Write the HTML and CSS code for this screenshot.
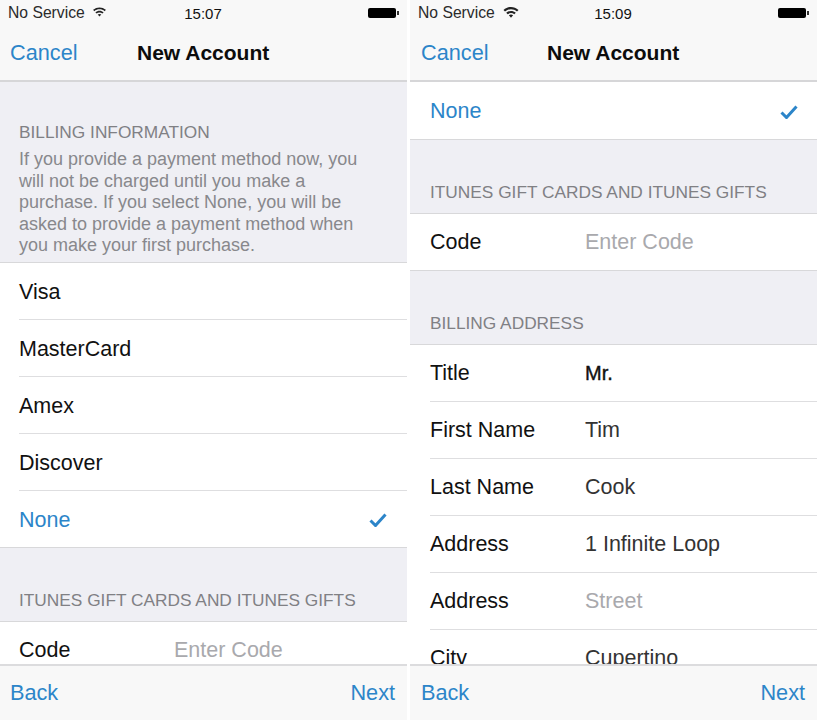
FILE: index.html
```html
<!DOCTYPE html>
<html lang="en">
<head>
<meta charset="utf-8">
<title>New Account</title>
<link rel="stylesheet" href="styles.css">
</head>
<body>
<main class="screens">
  <section class="phone">
    <header class="top">
      <div class="status">
        <div class="status-left"><span>No Service</span>
          <svg class="wifi wifi-small" viewBox="0 0 16 12"><path d="M1 4.200C5 .6 11 .6 15 4.200l-1.300 1.400C10.500 2.700 5.500 2.700 2.300 5.600zM3.500 6.800c2.600-2.300 6.400-2.300 9 0l-1.300 1.400c-1.900-1.600-4.500-1.600-6.400 0zM6 9.300c1.200-.9 2.800-.9 4 0L8 11.500z"/></svg>
        </div>
        <span class="clock">15:07</span>
        <div class="status-right"><span class="battery"></span><span class="nub"></span></div>
      </div>
      <nav class="nav"><a class="link">Cancel</a><h1 class="title">New Account</h1></nav>
    </header>
    <div class="content">
      <div class="band band-billing">
        <h2 class="caption">BILLING INFORMATION</h2>
        <p class="note">If you provide a payment method now, you will not be charged until you make a purchase. If you select None, you will be asked to provide a payment method when you make your first purchase.</p>
      </div>
      <ul class="list">
        <li class="row"><span>Visa</span></li>
        <li class="row"><span>MasterCard</span></li>
        <li class="row"><span>Amex</span></li>
        <li class="row"><span>Discover</span></li>
        <li class="row row-last selected"><span>None</span>
          <svg class="check" viewBox="0 0 18 14"><path d="M1.500 7.500l5 5L16.500 1.500"/></svg></li>
      </ul>
      <div class="band band-gift"><h2 class="caption">ITUNES GIFT CARDS AND ITUNES GIFTS</h2></div>
      <ul class="list">
        <li class="row row-last row-code"><span class="label">Code</span><span class="placeholder">Enter Code</span></li>
      </ul>
    </div>
    <footer class="bottom"><a class="link">Back</a><a class="link">Next</a></footer>
  </section>

  <section class="phone phone-right">
    <header class="top">
      <div class="status">
        <div class="status-left"><span>No Service</span>
          <svg class="wifi" viewBox="0 0 16 12"><path d="M.5 4C4.800 0 11.200 0 15.500 4l-1.500 1.600C10.500 2.400 5.500 2.400 2 5.600zM3.200 6.800c2.800-2.500 6.800-2.500 9.600 0l-1.500 1.500c-2-1.700-4.600-1.700-6.600 0zM5.900 9.300c1.300-1 2.900-1 4.200 0L8 11.700z"/></svg>
        </div>
        <span class="clock">15:09</span>
        <div class="status-right"><span class="battery"></span><span class="nub"></span></div>
      </div>
      <nav class="nav"><a class="link">Cancel</a><h1 class="title">New Account</h1></nav>
    </header>
    <div class="content">
      <ul class="list">
        <li class="row row-last selected"><span>None</span>
          <svg class="check" viewBox="0 0 18 14"><path d="M1.500 7.500l5 5L16.500 1.500"/></svg></li>
      </ul>
      <div class="band band-gift"><h2 class="caption">ITUNES GIFT CARDS AND ITUNES GIFTS</h2></div>
      <ul class="list">
        <li class="row row-last"><span class="label">Code</span><span class="placeholder">Enter Code</span></li>
      </ul>
      <div class="band band-gift"><h2 class="caption">BILLING ADDRESS</h2></div>
      <ul class="list">
        <li class="row"><span class="label">Title</span><span class="value-strong">Mr.</span></li>
        <li class="row"><span class="label">First Name</span><span class="value">Tim</span></li>
        <li class="row"><span class="label">Last Name</span><span class="value">Cook</span></li>
        <li class="row"><span class="label">Address</span><span class="value">1 Infinite Loop</span></li>
        <li class="row"><span class="label">Address</span><span class="placeholder">Street</span></li>
        <li class="row"><span class="label">City</span><span class="value">Cupertino</span></li>
      </ul>
    </div>
    <footer class="bottom"><a class="link">Back</a><a class="link">Next</a></footer>
  </section>
</main>
</body>
</html>
```

FILE: styles.css
```css
* { box-sizing: border-box; }
html, body { margin: 0; padding: 0; background: #fff; }
body { font-family: "Liberation Sans", Arial, sans-serif; color: #111; }
h1, h2, p, ul { margin: 0; padding: 0; }
ul { list-style: none; }

.screens { display: grid; grid-template-columns: 407px 407px; column-gap: 3px; height: 720px; width: 817px; }
.phone { --inset: 19px; --edge: 10px; --row-top: 2px; --row-end: 20px; display: flex; flex-direction: column; height: 720px; overflow: hidden; background: #efeff4; }
.phone-right { --inset: 20px; --edge: 11px; --row-top: 1px; --row-end: 19px; }
.phone-right .content { padding-top: 1px; background: #fff; }
.phone-right .band { background: #efeff4; }

.top { flex: none; height: 82px; background: #f8f8f8; border-bottom: 2px solid #d6d6d8; }
.status { display: grid; grid-template-columns: 1fr auto 1fr; align-items: center; height: 26px; padding: 0 8px; font-size: 15px; color: #2a2a2a; }
.status-left { display: flex; align-items: center; gap: 8px; font-size: 15.700px; }
.wifi { width: 16px; height: 12px; fill: #222; margin-bottom: 3px; }
.wifi-small { width: 15px; height: 11px; margin-left: -1px; }
.clock { color: #111; margin-right: 1px; }
.status-right { display: flex; justify-content: flex-end; align-items: center; }
.battery { width: 28px; height: 10px; background: #000; border-radius: 2px; }
.nub { width: 2px; height: 4px; background: #333; margin-left: 1px; }

.nav { display: grid; grid-template-columns: calc(137px - var(--edge)) auto; align-items: center; height: 54px; padding-left: var(--edge); }
.title { font-size: 21px; font-weight: 700; color: #0c0c0c; }
.link { font-size: 21.700px; color: #2c85c9; }

.content { flex: 1; min-height: 0; overflow: hidden; }

.band { padding: 0 var(--inset); }
.band-billing { height: 181px; padding-top: 40px; padding-right: 38px; border-bottom: 1px solid #d8d8da; }
.band-gift { height: 74px; padding-top: 42px; border-bottom: 1px solid #d8d8da; }
.caption { font-size: 17.300px; font-weight: 400; color: #808084; line-height: 20px; }
.note { font-size: 18px; color: #88888c; line-height: 21.500px; margin-top: 7px; }

.list { background: #fff; padding-left: var(--inset); }
.row { display: flex; align-items: center; height: 57px; padding-top: var(--row-top); padding-right: var(--row-end); font-size: 21.500px; border-bottom: 1px solid #dedee0; color: #111; }
.row-code { padding-top: 1px; }
.row-last { margin-left: calc(-1 * var(--inset)); padding-left: var(--inset); border-bottom-color: #d8d8da; }
.selected { justify-content: space-between; color: #2c85c9; }
.check { width: 18px; height: 14px; fill: none; stroke: #2c85c9; stroke-width: 3; }

.label { flex: none; width: 155px; }
.value { color: #333; }
.value-strong { color: #111; font-size: 20px; -webkit-text-stroke: .4px #111; }
.placeholder { color: #a9a9ad; }

.bottom { flex: none; height: 56px; display: flex; justify-content: space-between; align-items: center; padding: 0 12px 0 var(--edge); background: #f8f8f8; border-top: 2px solid #dcdcde; }
```
